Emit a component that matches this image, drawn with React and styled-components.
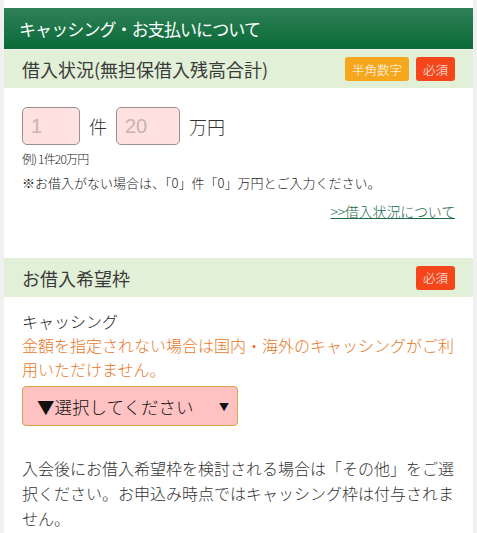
import React from "react";
import styled, { createGlobalStyle } from "styled-components";

const Global = createGlobalStyle`
  html, body { margin: 0; padding: 0; background: #f0f0f0; }
  body { font-family: "Noto Sans CJK JP", "Noto Sans", sans-serif; color: #333; font-weight: 300; }
  * { box-sizing: border-box; }
`;

const Panel = styled.div`
  margin: 0 4px 0 4px;
  background: #fff;
  padding-top: 8px;
  min-height: 533px;
`;

const Title = styled.div`
  height: 41px;
  display: flex;
  align-items: center;
  padding: 0 15px;
  background: linear-gradient(#2f8058, #0a6a37);
  color: #fff;
  font-size: 17px;
  font-weight: 400;
  letter-spacing: -0.9px;
`;

const SectionHead = styled.div`
  height: 39px;
  display: flex;
  align-items: center;
  justify-content: space-between;
  padding: 0 18px 0 18px;
  background: #e2f0d8;
  color: #3b3b3b;
  font-size: 18px;
  font-weight: 400;
  border-top: ${(p) => (p.$top ? "1px solid #f3f3f3" : "none")};
`;

const Badges = styled.div`
  display: flex;
  gap: 7px;
`;

const Badge = styled.span`
  height: 24px;
  display: inline-flex;
  align-items: center;
  padding: 0 7px;
  border-radius: 3px;
  color: #fff;
  font-size: 12.5px;
  font-weight: 300;
  background: ${(p) => (p.$kind === "req" ? "#f4461a" : "#f5a71d")};
`;

const Body = styled.div`
  padding: ${(p) => p.$pad || "19px 18px 0 18px"};
  height: ${(p) => p.$h || "auto"};
`;

const InputRow = styled.div`
  display: flex;
  align-items: center;
  gap: 9px;
`;

const NumInput = styled.div`
  width: ${(p) => p.$w}px;
  height: 38px;
  border: 1px solid #9b8f8f;
  border-radius: 5px;
  background: #ffe1e1;
  color: #c6b3b3;
  font-family: "Liberation Sans", Arial, sans-serif;
  font-size: 20px;
  display: flex;
  align-items: center;
  padding-left: 8px;
`;

const Unit = styled.span`
  font-size: 18px;
  color: #333;
`;

const Small = styled.div`
  font-size: ${(p) => p.$size || 12}px;
  margin-top: ${(p) => p.$mt || 0}px;
  line-height: 1.2;
  color: #222;
  letter-spacing: ${(p) => p.$ls || 0}px;
`;

const LinkRow = styled.div`
  display: flex;
  justify-content: flex-end;
  margin-top: 10px;
`;

const Link = styled.a`
  color: #1c6c47;
  font-size: 14px;
  text-decoration: underline;
  letter-spacing: -0.2px;
`;

const Label = styled.div`
  font-size: 16px;
  color: #222;
  line-height: 24px;
`;

const Notice = styled.div`
  font-size: 16px;
  color: #e8771f;
  line-height: 24px;
`;

const SelectBox = styled.div`
  margin-top: 5px;
  width: 216px;
  height: 40px;
  border: 1.5px solid #d9a545;
  border-radius: 4px;
  background: #ffc2c2;
  display: flex;
  align-items: center;
  justify-content: space-between;
  padding: 0 8px 0 14px;
  font-size: 17.5px;
  color: #111;
`;

const Arrow = styled.span`
  font-size: 10px;
  color: #111;
`;

const Para = styled.p`
  margin: 30px 0 0 0;
  font-size: 16px;
  line-height: 25px;
  color: #333;
`;

export default function App() {
  return (
    <>
      <Global />
      <Panel>
        <Title>キャッシング・お支払いについて</Title>
        <SectionHead $top>
          <span>借入状況(無担保借入残高合計)</span>
          <Badges>
            <Badge>半角数字</Badge>
            <Badge $kind="req">必須</Badge>
          </Badges>
        </SectionHead>
        <Body $h="170px">
          <InputRow>
            <NumInput $w={58}>1</NumInput>
            <Unit>件</Unit>
            <NumInput $w={64}>20</NumInput>
            <Unit>万円</Unit>
          </InputRow>
          <Small $mt={7} $ls={-0.8}>例) 1件20万円</Small>
          <Small $size={13} $mt={9}>※お借入がない場合は、「0」件「0」万円とご入力ください。</Small>
          <LinkRow>
            <Link href="#">&gt;&gt;借入状況について</Link>
          </LinkRow>
        </Body>
        <SectionHead>
          <span>お借入希望枠</span>
          <Badge $kind="req">必須</Badge>
        </SectionHead>
        <Body $pad="12px 18px 0 18px">
          <Label>キャッシング</Label>
          <Notice>金額を指定されない場合は国内・海外のキャッシングがご利用いただけません。</Notice>
          <SelectBox>
            <span>▼選択してください</span>
            <Arrow>▼</Arrow>
          </SelectBox>
          <Para>入会後にお借入希望枠を検討される場合は「その他」をご選択ください。お申込み時点ではキャッシング枠は付与されません。</Para>
        </Body>
      </Panel>
    </>
  );
}
